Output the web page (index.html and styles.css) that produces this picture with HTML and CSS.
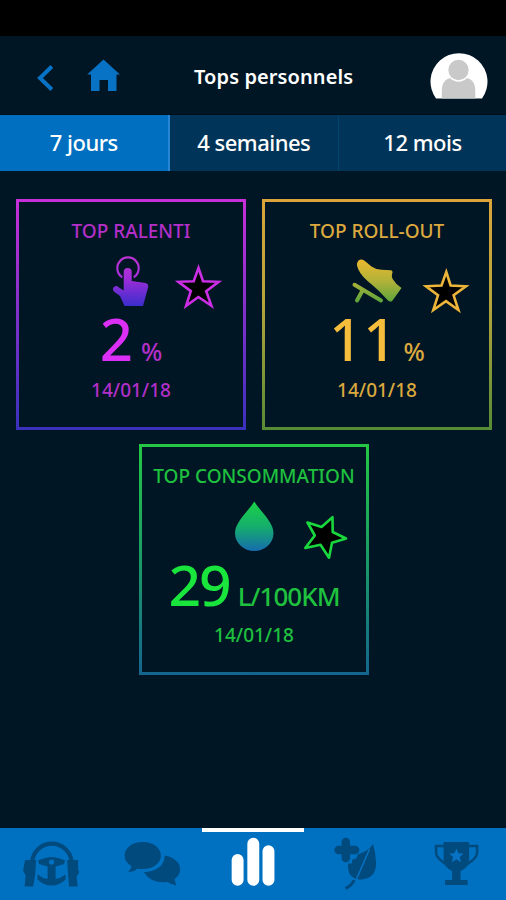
FILE: index.html
```html
<!DOCTYPE html>
<html lang="fr">
<head>
<meta charset="utf-8">
<title>Tops personnels</title>
<link rel="stylesheet" href="styles.css">
</head>
<body>
<div class="app">
  <div class="status"></div>
  <header class="header">
    <svg class="back" viewBox="36 64 18 28"><path d="M51.800 66.500 40 78l11.800 11.500" fill="none" stroke="#0873c4" stroke-width="4"/></svg>
    <svg class="home" viewBox="86 58 35 34"><path d="M103.500 59.500 120 74.500h-3.500V91H108V80h-8.500v11H91V74.500h-3.800z" fill="#0873c4"/></svg>
    <h1>Tops personnels</h1>
    <svg class="avatar" viewBox="430 52 58 47"><path d="M436 98.500A28.500 28.500 0 1 1 482 98.500z" fill="#fff"/><path d="M441.800 98.500v-7q0-13 10-13.500h13.500q10 .5 10 13.500v7z" fill="#c9c9c9"/><circle cx="458.500" cy="70" r="10.900" fill="#c9c9c9" stroke="#fff" stroke-width="1.500"/></svg>
  </header>
  <nav class="tabs">
    <a class="tab active"><span>7 jours</span></a>
    <a class="tab"><span>4 semaines</span></a>
    <a class="tab"><span>12 mois</span></a>
  </nav>
  <main class="cards">
    <section class="card purple">
      <h2>TOP RALENTI</h2>
      <svg class="art" viewBox="16 252 230 60">
        <defs><linearGradient id="gp" x1="0" y1="257" x2="0" y2="307" gradientUnits="userSpaceOnUse"><stop offset="0" stop-color="#bd32d3"/><stop offset=".4" stop-color="#a32dd8"/><stop offset="1" stop-color="#372dcc"/></linearGradient></defs>
        <path d="M122.300 277.200a10.700 10.700 0 1 1 11.400 0" fill="none" stroke="url(#gp)" stroke-width="2.200"/>
        <path d="M123.700 272q0-4 4-4t4 4v9l14 2q3 1 2.500 4l-5.200 19h-18.500l-4.500-10-5.500-4q-3-3-.5-5t5 .5l4.700 3z" fill="url(#gp)"/>
        <path d="m198.500 268 4.500 13.200 15.600.6-12.400 9.300 5.200 14.700-13-8.800-12.300 8.800 4.700-14.700-12.400-9.300 15.300-.6z" fill="#000" stroke="#cb2ee5" stroke-width="2.600"/>
      </svg>
      <p class="value"><b>2</b><span>%</span></p>
      <p class="date">14/01/18</p>
    </section>
    <section class="card gold">
      <h2>TOP ROLL-OUT</h2>
      <svg class="art" viewBox="262 252 230 60">
        <defs><linearGradient id="gy" x1="0" y1="259" x2="0" y2="303" gradientUnits="userSpaceOnUse"><stop offset="0" stop-color="#edb82e"/><stop offset=".5" stop-color="#b2b239"/><stop offset="1" stop-color="#58a43b"/></linearGradient></defs>
        <path d="M358.500 260.500q3.500-2.200 7 1l6 5q4 3 10 3.300l9.500.4q2.500.8 1 4-.8 3 1 5.300 3 5 8.500 8.500l-9.500 13.300q-2.500.8-4.500-1.300l-9-9.500q-5-4.500-11-9.500-9-8-10.500-15.500 0-3.500 1.500-5z" fill="url(#gy)"/>
        <path d="m354.500 284.800 26.500 15.700M362.500 290.500l-5.500 10" fill="none" stroke="url(#gy)" stroke-width="4" stroke-linecap="round"/>
        <path d="m446.300 272 4.300 13.500 15.300.8-12.300 9 4.800 14.700-12.400-8.800-12.700 8.800 4.700-14.700-12-9 15.500-.8z" fill="#000" stroke="#edb63a" stroke-width="2.600"/>
      </svg>
      <p class="value wide"><b>11</b><span>%</span></p>
      <p class="date">14/01/18</p>
    </section>
    <section class="card green">
      <h2>TOP CONSOMMATION</h2>
      <svg class="art" viewBox="139 497 230 60">
        <defs><linearGradient id="gg" x1="0" y1="501" x2="0" y2="551" gradientUnits="userSpaceOnUse"><stop offset="0" stop-color="#1bd246"/><stop offset=".5" stop-color="#15af6b"/><stop offset="1" stop-color="#166cae"/></linearGradient></defs>
        <path d="M254.300 501.500C260 511 273.500 522 273.500 533a19.200 18 0 0 1-38.500 0C235 522 248.500 511 254.300 501.500z" fill="url(#gg)"/>
        <path d="m332.500 517.200.2 14.800 13.300 6.500-14 4.300-3 15-8.500-13-15.200 3.200 9.500-12.500-7.300-13 14 4.500z" fill="#000" stroke="#19d83d" stroke-width="2.600" stroke-linejoin="round"/>
      </svg>
      <p class="value long"><b>29</b><span>L/100KM</span></p>
      <p class="date">14/01/18</p>
    </section>
  </main>
  <nav class="bottom">
    <a class="item"><svg viewBox="0 832 101 68">
      <path d="M32 862a19.800 19.800 0 0 1 39.500 0" fill="none" stroke="#004a7d" stroke-width="4.200"/>
      <path d="M25 860h11l-1 15-2 11.500h-8.500l1-11-2.500-5zM67 860h11v9l1 3-2.500 5 1 9.500H69l-1-11.500z" fill="#004a7d"/>
      <path fill-rule="evenodd" d="M38 860.500q8-3.500 13.500-3.500T65 860.500l-1 3.500-8.500 2.500V879q5-.5 10-4.500v5q-6 6-14 6t-14-6v-5q5 4 10 4.500v-12.500L39 864zm10.900 1.500a2.600 2.600 0 1 0 5.200 0 2.600 2.600 0 1 0-5.200 0z" fill="#004a7d"/>
    </svg></a>
    <a class="item"><svg viewBox="101.500 832 101 68">
      <path d="M143 842c11 0 18.300 6 18.300 13.500S154 869 143 869q-3 0-5-.5-4 3.500-9.500 3.500 3-2.500 3.500-6-7-4-7-10.500c0-7.500 7.500-13.500 18-13.500z" fill="#004a7d"/>
      <path d="M165 855.500c9 1.500 15.500 7 15.500 13.500q0 6-5.500 10 .5 4 2 6.500-4.500-.5-9-3.500c-11 1.500-20-3-23.500-10 12 0 21-7 20.500-16.500z" fill="#004a7d"/>
    </svg></a>
    <a class="item current"><svg viewBox="202 832 102 68">
      <path d="M237.900 860v20M253.700 843.500v36.500M269 851v29" stroke="#fff" stroke-width="12" stroke-linecap="round"/>
    </svg></a>
    <a class="item"><svg viewBox="304 832 101 68">
      <path d="M345.700 842v16M338.500 850h16.500" stroke="#004a7d" stroke-width="8.500" stroke-linecap="round"/>
      <path d="M373 844q2.500 9 3 19 0 15.500-15 16.500-5 .5-9.500-3-4.500-5-3.500-13h4v-4q5 0 5.500-5 12-4 15.500-10.500z" fill="#004a7d"/>
      <path d="m369.500 849-13.500 31" stroke="#0771c3" stroke-width="1.500"/>
      <path d="M354 880q-2 5-8.500 8.500" stroke="#004a7d" stroke-width="3" fill="none"/>
    </svg></a>
    <a class="item"><svg viewBox="405 832 101 68">
      <path d="M445 846h-9v7q0 5 11 12M468 846h9v7q0 5-11 12" fill="none" stroke="#004a7d" stroke-width="2.500"/>
      <path d="M443.500 842h25.500v18q0 7-8.500 11v9h7v5h-22.500v-5h7v-9q-8.500-4-8.500-11z" fill="#004a7d"/>
      <path d="m456.300 848.500 2 4.800 5.200.3-4 3.300 1.500 5.300-4.700-2.900-4.700 2.900 1.500-5.300-4-3.300 5.200-.3z" fill="#0873c4"/>
    </svg></a>
  </nav>
</div>
</body>
</html>
```

FILE: styles.css
```css
* { box-sizing: border-box; margin: 0; padding: 0; }
body {
  width: 506px;
  height: 900px;
  overflow: hidden;
  background: #001625;
  font-family: "Noto Sans", "Open Sans", sans-serif;
}
.app { display: flex; flex-direction: column; height: 900px; }
.status { height: 36px; background: #000; }
.header {
  height: 79px;
  display: grid;
  grid-template-columns: 36px 18px 32px 35px 1fr 58px 18px;
  border-bottom: 1px solid #00101b;
}
.back { grid-column: 2; width: 18px; height: 28px; margin-top: 28px; }
.home { grid-column: 4; width: 35px; height: 34px; margin-top: 22px; }
.header h1 {
  grid-column: 5;
  color: #fff;
  font-size: 20px;
  line-height: 28px;
  font-weight: 600;
  letter-spacing: .1px;
  white-space: nowrap;
  margin: 27px 0 0 73px;
}
.avatar { grid-column: 6; width: 58px; height: 47px; margin-top: 16px; }
.tabs { height: 56px; display: grid; grid-template-columns: 169.500px 169.500px 1fr; }
.tab {
  display: flex;
  justify-content: center;
  background: #003458;
  color: #fff;
  font-size: 22px;
  line-height: 55px;
  font-weight: 500;
  letter-spacing: -.5px;
  white-space: nowrap;
  border-right: 1px solid #00436f;
}
.tab:last-child { border-right: 0; }
.tab.active { background: #006fc0; border-right: 2px solid #2686d5; }
.cards {
  flex: 1;
  display: flex;
  flex-wrap: wrap;
  justify-content: center;
  align-content: flex-start;
  gap: 14px 16px;
  padding: 28px 0 0 2px;
}
.card {
  width: 230px;
  height: 231px;
  border: 3px solid;
  text-align: center;
  white-space: nowrap;
}
.purple { color: #b42fc9; border-image: linear-gradient(#c72fd9, #3a31bd) 3; }
.gold { color: #dca93e; border-image: linear-gradient(#dba43a, #b5a53b 45%, #568b35) 3; }
.green { color: #1fc13e; border-image: linear-gradient(#24c744, #1a9b65 50%, #15658f) 3; }
.purple b { color: #dc2ff5; }
.gold b { color: #f5bd3b; }
.green b { color: #19e53c; }
.card h2 { height: 50px; padding-top: 15px; font-size: 19px; line-height: 28px; font-weight: 500; }
.art { display: block; width: 230px; height: 60px; margin-left: -3px; overflow: visible; }
.value { display: flex; justify-content: center; align-items: baseline; height: 60px; line-height: 60px; margin-top: -3px; }
.value b { font-size: 58px; font-weight: 500; }
.value span { font-size: 25px; font-weight: 500; margin-left: 8px; }
.value.wide b { letter-spacing: 1px; }
.value.wide span { margin-left: 6px; }
.value.long b { font-size: 57px; letter-spacing: -2px; }
.value.long span { font-size: 26px; letter-spacing: -1px; }
.date { font-size: 19px; line-height: 28px; font-weight: 500; margin-top: 7px; }
.bottom { height: 72px; background: #0070c1; display: grid; grid-template-columns: repeat(5, 1fr); }
.item { border-top: 4px solid transparent; }
.item svg { display: block; width: 100%; height: 68px; }
.item.current { border-top-color: #fff; }
```
